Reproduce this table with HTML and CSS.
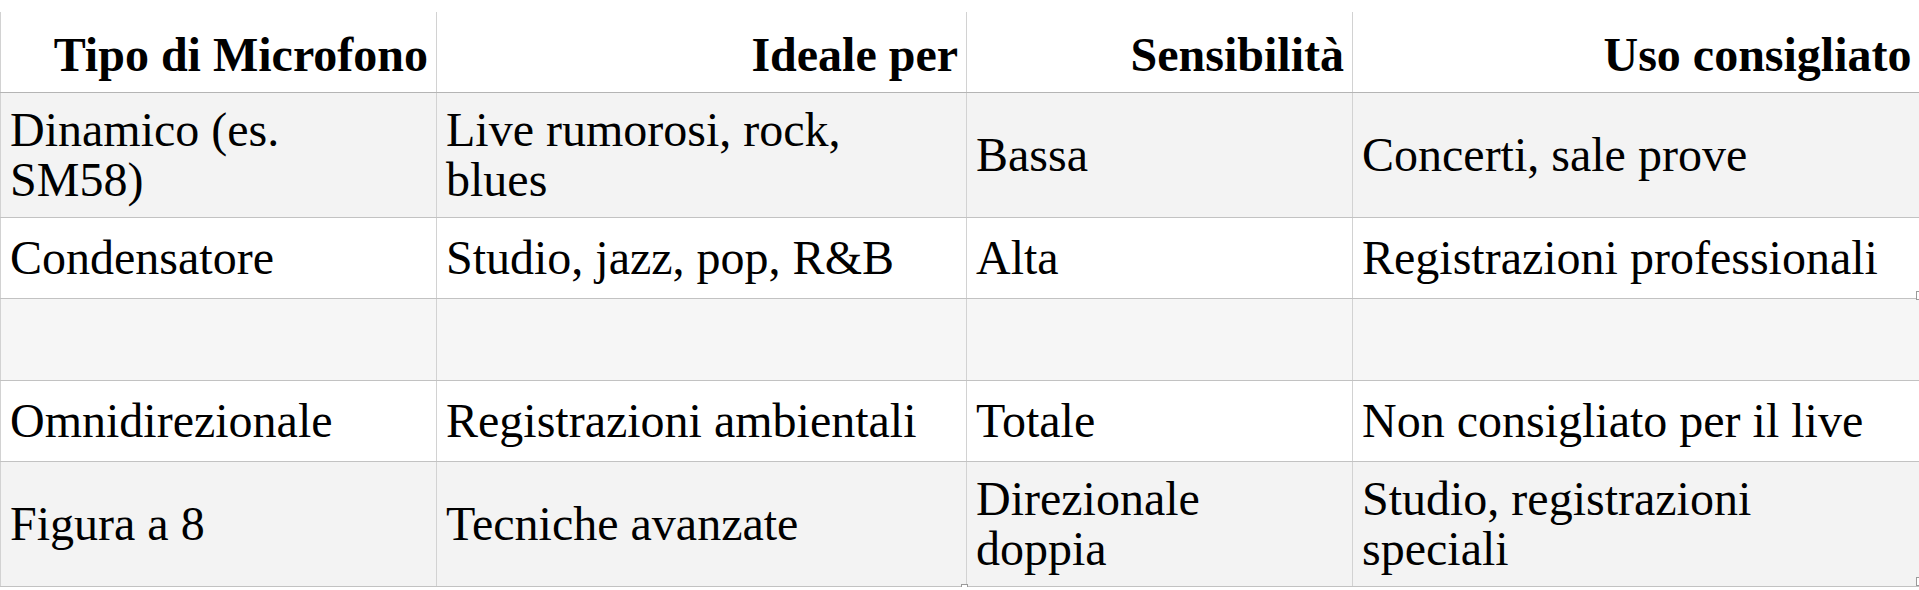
FILE: index.html
```html
<!DOCTYPE html>
<html lang="it">
<head>
<meta charset="utf-8">
<title>Tipi di microfono</title>
<link rel="stylesheet" href="styles.css">
</head>
<body>
<div class="page">
  <div class="table-wrap">
    <table class="mic-table">
      <colgroup>
        <col class="c1"><col class="c2"><col class="c3"><col class="c4">
      </colgroup>
      <thead>
        <tr class="head-row">
          <th>Tipo di Microfono</th>
          <th>Ideale per</th>
          <th>Sensibilità</th>
          <th>Uso consigliato</th>
        </tr>
      </thead>
      <tbody>
        <tr class="row shade">
          <td>Dinamico (es. SM58)</td>
          <td>Live rumorosi, rock, blues</td>
          <td>Bassa</td>
          <td>Concerti, sale prove</td>
        </tr>
        <tr class="row">
          <td>Condensatore</td>
          <td>Studio, jazz, pop, R&amp;B</td>
          <td>Alta</td>
          <td>Registrazioni professionali</td>
        </tr>
        <tr class="row blank">
          <td></td><td></td><td></td><td></td>
        </tr>
        <tr class="row">
          <td>Omnidirezionale</td>
          <td>Registrazioni ambientali</td>
          <td>Totale</td>
          <td>Non consigliato per il live</td>
        </tr>
        <tr class="row shade">
          <td>Figura a 8</td>
          <td>Tecniche avanzate</td>
          <td>Direzionale doppia</td>
          <td>Studio, registrazioni speciali</td>
        </tr>
      </tbody>
    </table>
    <span class="handle handle-bottom"></span>
    <span class="handle handle-right-a"></span>
    <span class="handle handle-right-b"></span>
  </div>
</div>
</body>
</html>
```

FILE: styles.css
```css
html, body {
  margin: 0;
  padding: 0;
  background: #ffffff;
  overflow: hidden;
}

.page {
  padding-top: 12px;
  font-family: "Liberation Serif", "Times New Roman", serif;
  color: #000;
}

.table-wrap {
  position: relative;
  width: 1919px;
}

.mic-table {
  width: 1919px;
  table-layout: fixed;
  border-collapse: collapse;
  font-size: 48px;
  line-height: 50px;
}

.c1 { width: 436px; }
.c2 { width: 530px; }
.c3 { width: 386px; }
.c4 { width: 567px; }

.mic-table th,
.mic-table td {
  padding: 12px 24px 12px 9px;
  border-left: 1px solid #d2d2d2;
  border-bottom: 1px solid #c2c2c2;
  vertical-align: middle;
  text-align: left;
  font-weight: normal;
}

.mic-table th {
  font-weight: bold;
  text-align: right;
  border-bottom-color: #b4b4b4;
  padding: 15px 8px 9px 9px;
}

.head-row { height: 80px; }
.row { height: 81px; }

.shade { background: #f3f3f3; }
.blank { background: #f6f6f6; height: 82px; }

.handle {
  position: absolute;
  width: 5px;
  height: 7px;
  border: 1px solid #9a9a9a;
  background: #fff;
}

.handle-bottom { left: 961px; bottom: -6px; }
.handle-right-a { right: -4px; top: 279px; }
.handle-right-b { right: -4px; top: 565px; }
```
